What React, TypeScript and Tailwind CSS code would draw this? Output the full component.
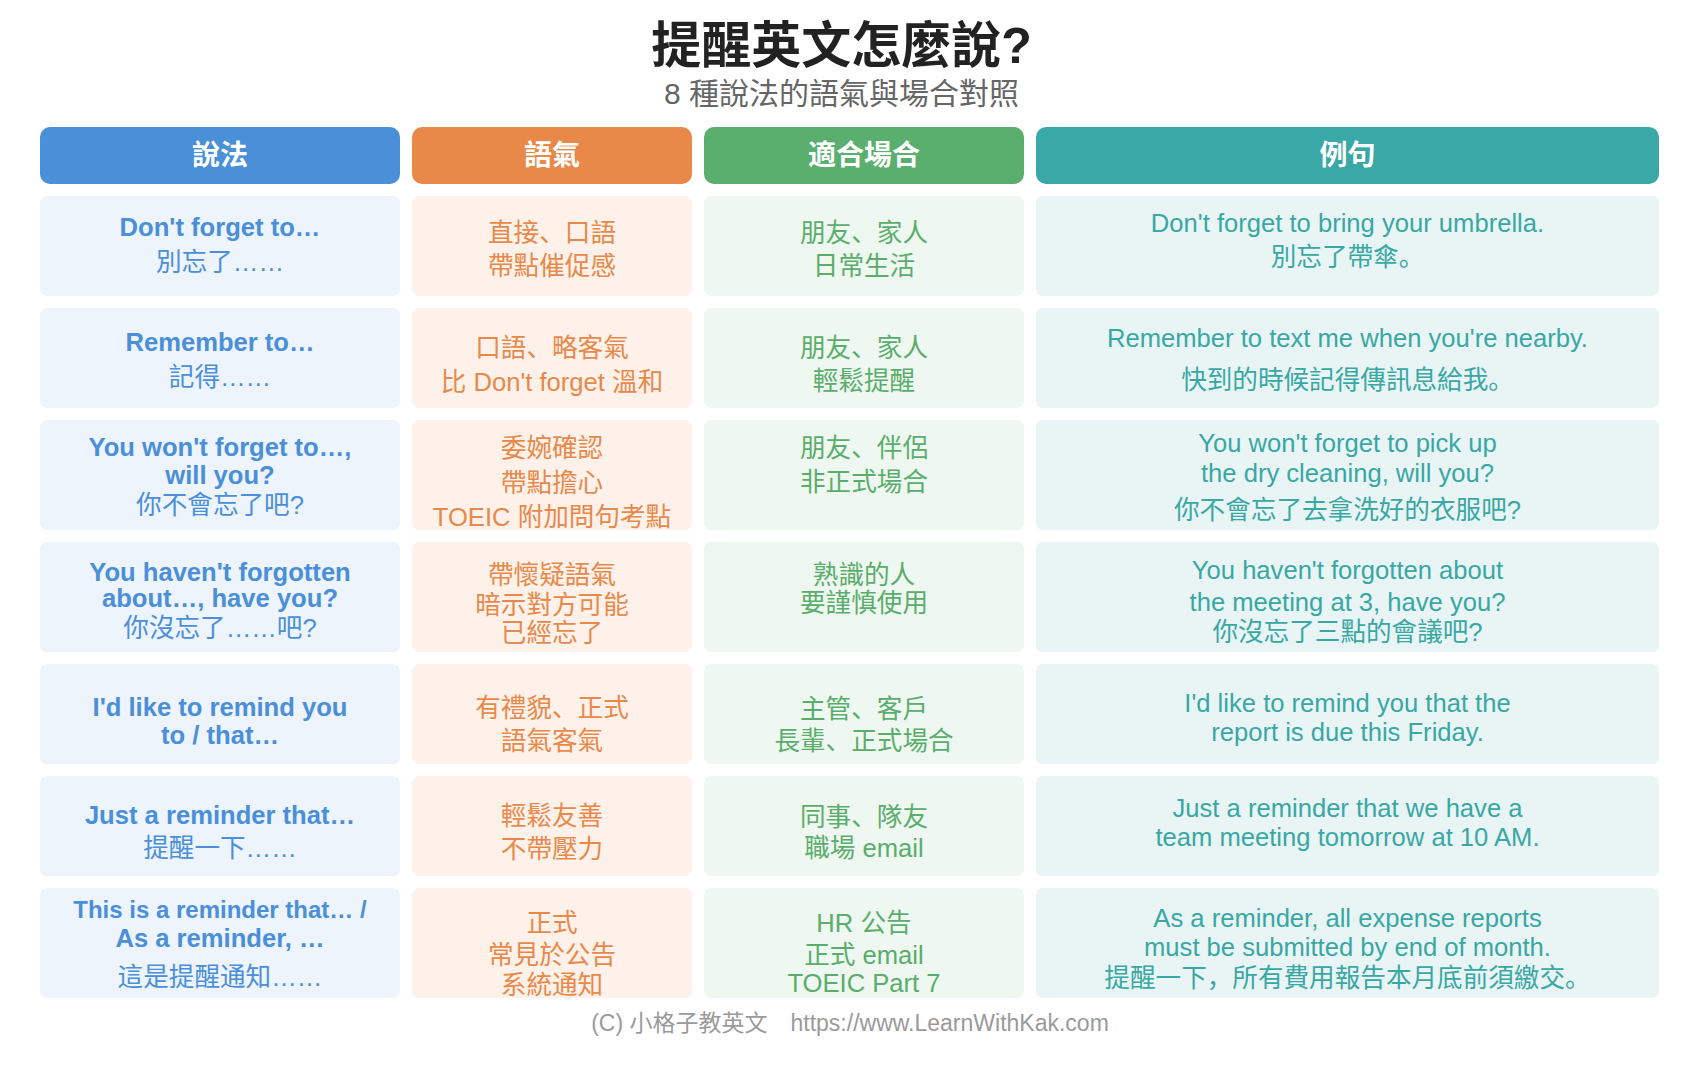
import React from "react";

type Line = { t: string; m: string; b?: boolean; s?: string };
type Row = { h: string; c: Line[][] };

const rows: Row[] = [
  {
    h: "h-[100px]",
    c: [
      [
        { t: "Don't forget to…", m: "mt-[16px]", b: true },
        { t: "別忘了……", m: "mt-[5px]" },
      ],
      [
        { t: "直接、口語", m: "mt-[22px]" },
        { t: "帶點催促感", m: "mt-[3px]" },
      ],
      [
        { t: "朋友、家人", m: "mt-[22px]" },
        { t: "日常生活", m: "mt-[3px]" },
      ],
      [
        { t: "Don't forget to bring your umbrella.", m: "mt-[12px]" },
        { t: "別忘了帶傘。", m: "mt-[4px]" },
      ],
    ],
  },
  {
    h: "h-[100px]",
    c: [
      [
        { t: "Remember to…", m: "mt-[19px]", b: true },
        { t: "記得……", m: "mt-[5px]" },
      ],
      [
        { t: "口語、略客氣", m: "mt-[25px]" },
        { t: "比 Don't forget 溫和", m: "mt-[4px]" },
      ],
      [
        { t: "朋友、家人", m: "mt-[25px]" },
        { t: "輕鬆提醒", m: "mt-[3px]" },
      ],
      [
        { t: "Remember to text me when you're nearby.", m: "mt-[15px]" },
        { t: "快到的時候記得傳訊息給我。", m: "mt-[12px]" },
      ],
    ],
  },
  {
    h: "h-[110px]",
    c: [
      [
        { t: "You won't forget to…,", m: "mt-[12px]", b: true },
        { t: "will you?", m: "mt-[-2px]", b: true },
        { t: "你不會忘了吧?", m: "mt-[0px]" },
      ],
      [
        { t: "委婉確認", m: "mt-[13px]" },
        { t: "帶點擔心", m: "mt-[5px]" },
        { t: "TOEIC 附加問句考點", m: "mt-[4px]" },
      ],
      [
        { t: "朋友、伴侶", m: "mt-[13px]" },
        { t: "非正式場合", m: "mt-[4px]" },
      ],
      [
        { t: "You won't forget to pick up", m: "mt-[8px]" },
        { t: "the dry cleaning, will you?", m: "mt-[0px]" },
        { t: "你不會忘了去拿洗好的衣服吧?", m: "mt-[7px]" },
      ],
    ],
  },
  {
    h: "h-[110px]",
    c: [
      [
        { t: "You haven't forgotten", m: "mt-[15px]", b: true },
        { t: "about…, have you?", m: "mt-[-4px]", b: true },
        { t: "你沒忘了……吧?", m: "mt-[0px]" },
      ],
      [
        { t: "帶懷疑語氣", m: "mt-[18px]" },
        { t: "暗示對方可能", m: "mt-[0px]" },
        { t: "已經忘了", m: "mt-[-2px]" },
      ],
      [
        { t: "熟識的人", m: "mt-[18px]" },
        { t: "要謹慎使用", m: "mt-[-2px]" },
      ],
      [
        { t: "You haven't forgotten about", m: "mt-[13px]" },
        { t: "the meeting at 3, have you?", m: "mt-[2px]" },
        { t: "你沒忘了三點的會議吧?", m: "mt-[0px]" },
      ],
    ],
  },
  {
    h: "h-[100px]",
    c: [
      [
        { t: "I'd like to remind you", m: "mt-[28px]", b: true },
        { t: "to / that…", m: "mt-[-2px]", b: true },
      ],
      [
        { t: "有禮貌、正式", m: "mt-[29px]" },
        { t: "語氣客氣", m: "mt-[3px]" },
      ],
      [
        { t: "主管、客戶", m: "mt-[30px]" },
        { t: "長輩、正式場合", m: "mt-[2px]" },
      ],
      [
        { t: "I'd like to remind you that the", m: "mt-[24px]" },
        { t: "report is due this Friday.", m: "mt-[-1px]" },
      ],
    ],
  },
  {
    h: "h-[100px]",
    c: [
      [
        { t: "Just a reminder that…", m: "mt-[24px]", b: true },
        { t: "提醒一下……", m: "mt-[3px]" },
      ],
      [
        { t: "輕鬆友善", m: "mt-[25px]" },
        { t: "不帶壓力", m: "mt-[3px]" },
      ],
      [
        { t: "同事、隊友", m: "mt-[26px]" },
        { t: "職場 email", m: "mt-[1px]" },
      ],
      [
        { t: "Just a reminder that we have a", m: "mt-[17px]" },
        { t: "team meeting tomorrow at 10 AM.", m: "mt-[-1px]" },
      ],
    ],
  },
  {
    h: "h-[110px]",
    c: [
      [
        { t: "This is a reminder that… /", m: "mt-[7px]", b: true, s: "text-[24px]" },
        { t: "As a reminder, …", m: "mt-[-2px]", b: true },
        { t: "這是提醒通知……", m: "mt-[9px]" },
      ],
      [
        { t: "正式", m: "mt-[20px]" },
        { t: "常見於公告", m: "mt-[2px]" },
        { t: "系統通知", m: "mt-[0px]" },
      ],
      [
        { t: "HR 公告", m: "mt-[20px]" },
        { t: "正式 email", m: "mt-[2px]" },
        { t: "TOEIC Part 7", m: "mt-[-2px]" },
      ],
      [
        { t: "As a reminder, all expense reports", m: "mt-[15px]" },
        { t: "must be submitted by end of month.", m: "mt-[-1px]" },
        { t: "提醒一下，所有費用報告本月底前須繳交。", m: "mt-[1px]" },
      ],
    ],
  },
];

const cellStyles = [
  "bg-[#edf4fc] text-[#4a8fd8]",
  "bg-[#fdf1ea] text-[#e8894a]",
  "bg-[#eef7f0] text-[#5aad6c]",
  "bg-[#e8f5f4] text-[#39a7a4]",
];

const headers = [
  { t: "說法", c: "bg-[#4a90d9]" },
  { t: "語氣", c: "bg-[#e8894a]" },
  { t: "適合場合", c: "bg-[#5aae6e]" },
  { t: "例句", c: "bg-[#3aa8a7]" },
];

export default function App() {
  return (
    <div className="min-h-[1080px] w-[1700px] bg-white font-[family-name:'Liberation_Sans','Noto_Sans_CJK_SC',sans-serif]">
      <div className="pt-[16px] pr-[17px] flex flex-col items-center">
        <h1 className="text-[50px] leading-[60px] font-bold text-[#222222]">提醒英文怎麼說?</h1>
        <p className="text-[30px] leading-[36px] text-[#666666]">8 種說法的語氣與場合對照</p>
      </div>
      <div className="mt-[15px] pl-[40px]">
        <div className="grid grid-cols-[360px_280px_320px_623px] gap-x-[12px]">
          {headers.map((h) => (
            <div
              key={h.t}
              className={`${h.c} h-[57px] rounded-[10px] flex items-center justify-center text-white font-bold text-[28px]`}
            >
              {h.t}
            </div>
          ))}
        </div>
        <div className="mt-[12px] grid grid-cols-[360px_280px_320px_623px] gap-x-[12px] gap-y-[12px]">
          {rows.map((r, ri) =>
            r.c.map((cell, ci) => (
              <div
                key={`${ri}-${ci}`}
                className={`${r.h} ${cellStyles[ci]} rounded-[7px] flex flex-col items-center text-center text-[25.6px]`}
              >
                {cell.map((l, li) => (
                  <div
                    key={li}
                    className={`${l.m} ${l.s ?? ""} h-[30px] leading-[30px] whitespace-nowrap ${l.b ? "font-bold" : "font-normal"}`}
                  >
                    {l.t}
                  </div>
                ))}
              </div>
            ))
          )}
        </div>
      </div>
      <div className="mt-[10px] text-center text-[23px] leading-[30px] text-[#9a9a9a]">
        (C) 小格子教英文　https://www.LearnWithKak.com
      </div>
    </div>
  );
}
